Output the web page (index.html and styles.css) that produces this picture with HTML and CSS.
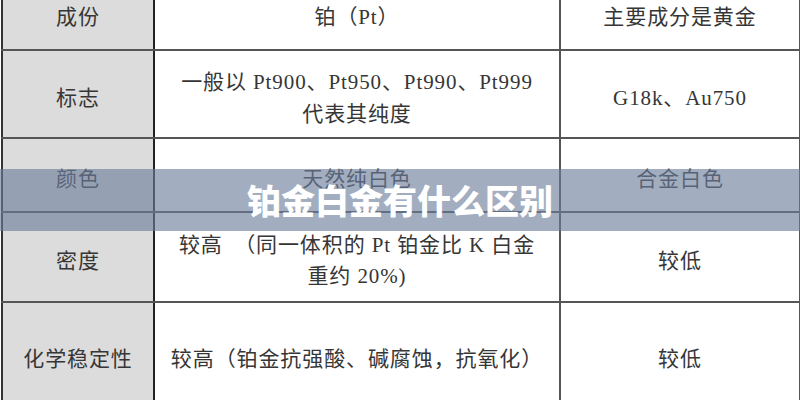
FILE: index.html
```html
<!DOCTYPE html>
<html lang="zh">
<head>
<meta charset="utf-8">
<title>铂金白金有什么区别</title>
<link rel="stylesheet" href="styles.css">
</head>
<body>
<div class="page">
  <table class="cmp">
    <colgroup>
      <col class="c1"><col class="c2"><col class="c3">
    </colgroup>
    <tr class="r1">
      <th>成份</th>
      <td>铂（Pt）</td>
      <td>主要成分是黄金</td>
    </tr>
    <tr class="r2">
      <th>标志</th>
      <td>一般以 Pt900、Pt950、Pt990、Pt999<br>代表其纯度</td>
      <td>G18k、Au750</td>
    </tr>
    <tr class="r3">
      <th>颜色</th>
      <td>天然纯白色</td>
      <td>合金白色</td>
    </tr>
    <tr class="r4">
      <th>密度</th>
      <td>较高　（同一体积的 Pt 铂金比 K 白金<br>重约 20%)</td>
      <td>较低</td>
    </tr>
    <tr class="r5">
      <th>化学稳定性</th>
      <td>较高（铂金抗强酸、碱腐蚀，抗氧化）</td>
      <td>较低</td>
    </tr>
  </table>
  <div class="banner"><h1 class="title">铂金白金有什么区别</h1></div>
</div>
</body>
</html>
```

FILE: styles.css
```css
html, body {
  margin: 0;
  padding: 0;
  background: #ffffff;
}
.page {
  position: relative;
  width: 800px;
  height: 400px;
  overflow: hidden;
}
.cmp {
  border-collapse: collapse;
  width: 798px;
  margin-left: 1px;
  table-layout: fixed;
  font-family: "Liberation Serif", "Noto Sans CJK SC", serif;
  font-size: 21px;
  letter-spacing: 0.9px;
  color: #363636;
  font-weight: 400;
}
.c1 { width: 152px; }
.c2 { width: 406px; }
.c3 { width: 240px; }
.cmp th, .cmp td {
  border: 2px solid #555555;
  text-align: center;
  vertical-align: middle;
  padding: 0;
  line-height: 31px;
}
.cmp th {
  background: #dcdcdc;
  font-weight: 400;
  border-left-color: #333333;
  border-right-color: #222222;
}
.cmp td + td {
  border-left-color: #222222;
}
.cmp tr.r1 th, .cmp tr.r1 td {
  border-top: none;
  height: 35px;
  padding-bottom: 14px;
}
.r2 th, .r2 td { height: 78px; padding-top: 8px; line-height: 32px; }
.r3 th, .r3 td { height: 64px; padding-top: 8px; }
.r4 th, .r4 td { height: 80px; padding-top: 8px; }
.r5 th, .r5 td { height: 112px; }
.banner {
  position: absolute;
  left: 0;
  right: 0;
  top: 169px;
  height: 62px;
  background: rgba(110, 125, 155, 0.63);
  display: flex;
  align-items: center;
  justify-content: center;
}
.title {
  margin: 0;
  font-family: "Noto Sans CJK SC", sans-serif;
  font-weight: 900;
  font-size: 34px;
  color: #ffffff;
  line-height: 1;
}
```
